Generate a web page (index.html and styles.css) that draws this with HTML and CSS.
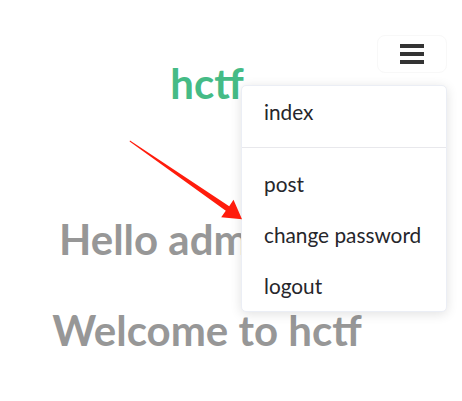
FILE: index.html
```html
<!DOCTYPE html>
<html lang="en">
<head>
<meta charset="utf-8">
<title>hctf</title>
<link rel="stylesheet" href="styles.css">
</head>
<body>
<div class="page">
  <nav class="nav">
    <button class="menu-btn" aria-label="menu">
      <span class="bar"></span><span class="bar"></span><span class="bar"></span>
    </button>
    <ul class="dropdown">
      <li class="item">index</li>
      <li class="divider"></li>
      <li class="item">post</li>
      <li class="item">change password</li>
      <li class="item">logout</li>
    </ul>
  </nav>
  <main class="main">
    <h1 class="logo">hctf</h1>
    <h2 class="hello">Hello admin</h2>
    <h2 class="welcome">Welcome to hctf</h2>
  </main>
  <svg class="arrow" width="462" height="401" viewBox="0 0 462 401">
    <polygon points="130,140.4 229.2,206.3 233.5,199.8 242,219.2 221.2,217.2 225.8,210.7 129.6,141.4" fill="#ff1c0c"/>
  </svg>
</div>
</body>
</html>
```
FILE: styles.css
```css
* { box-sizing: border-box; }
html, body { margin: 0; padding: 0; background: #fff; }
body { font-family: Lato, "Open Sans", sans-serif; }
.page { position: relative; width: 462px; height: 401px; overflow: hidden; }
.main { width: 414px; text-align: center; display: flex; flex-direction: column; align-items: center; }
.logo { margin: 58px 0 0; font-size: 42px; line-height: 50px; font-weight: 700; color: #45bb86; }
.hello { align-self: flex-start; margin: 106px 0 0 59px; font-size: 42px; line-height: 50px; font-weight: 700; color: #979797; white-space: nowrap; }
.welcome { margin: 41px 0 0; font-size: 42px; line-height: 50px; font-weight: 700; color: #979797; }
.nav { position: absolute; top: 35px; right: 15px; width: 206px; display: flex; flex-direction: column; align-items: flex-end; z-index: 2; }
.menu-btn { width: 70px; height: 38px; border: 1px solid #f8f8f8; border-radius: 8px; background: #fff; padding: 0; display: flex; flex-direction: column; align-items: center; justify-content: center; gap: 4px; }
.bar { display: block; width: 24px; height: 4px; background: #333; }
.dropdown { list-style: none; margin: 12px 0 0; padding: 0; width: 206px; background: #fff; border: 1px solid #ebeef5; border-radius: 5px; box-shadow: 0 2px 12px rgba(0,0,0,0.12); }
.item { font-size: 20.8px; line-height: 51px; height: 51px; padding-left: 22px; color: #26262b; white-space: nowrap; }
.divider { height: 1px; background: #e8e8ec; margin: 10px 0; }
.arrow { position: absolute; left: 0; top: 0; z-index: 3; pointer-events: none; }
```
